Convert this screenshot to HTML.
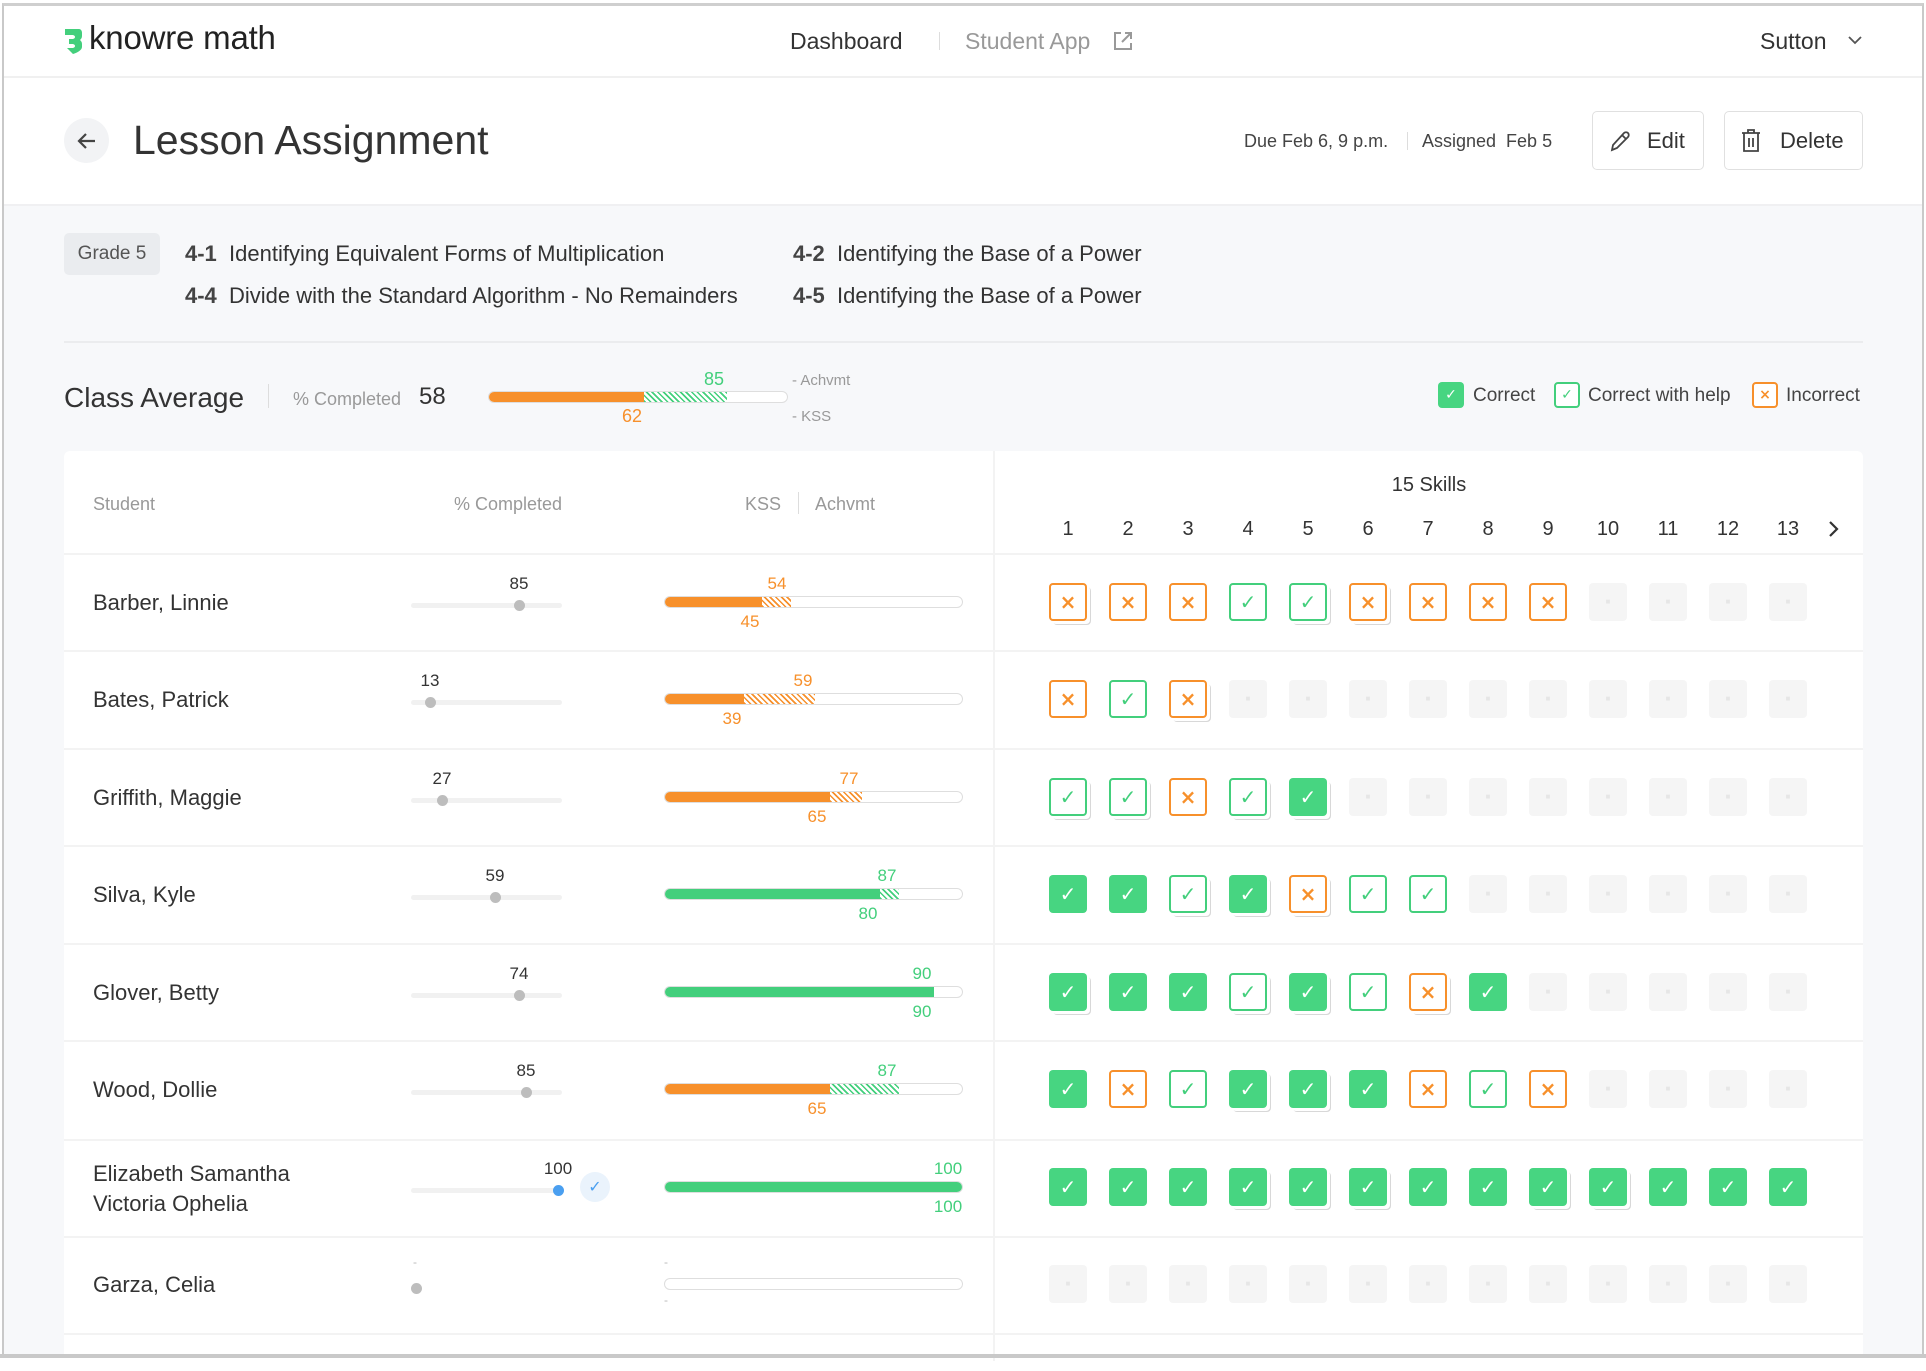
<!DOCTYPE html>
<html><head><meta charset="utf-8"><style>
*{box-sizing:border-box;margin:0;padding:0}
body{width:1926px;height:1358px;position:relative;overflow:hidden;background:#fff;font-family:"Liberation Sans",sans-serif;color:#333}
.a{position:absolute;white-space:nowrap}
.c{transform:translateX(-50%)}
.frame{position:absolute;left:2px;top:3px;width:1922px;height:1353px;border:2px solid #c9c9c9;border-top:3px solid #cfcfcf}
.or{color:#f7902b}.gr{color:#43cf7c}
.track{position:absolute;height:5px;background:#f1f1f1;border-radius:3px}
.dot{position:absolute;width:11px;height:11px;border-radius:50%;background:#bdbdbd}
.bar{position:absolute;height:12px;border:1px solid #dedede;border-radius:6px;background:#fff;overflow:hidden}
.sol{position:absolute;left:0;top:0;bottom:0}
.hat{position:absolute;top:0;bottom:0}
.hatO{background:repeating-linear-gradient(45deg,#f7902b 0 1.6px,#fff 1.6px 4px)}
.hatG{background:repeating-linear-gradient(45deg,#43cf7c 0 1.6px,#fff 1.6px 4px)}
.boxes{position:absolute;left:1049px;display:flex;gap:22px}
.b{width:38px;height:38px;border-radius:4px;display:flex;align-items:center;justify-content:center;font-size:20px;font-family:"DejaVu Sans",sans-serif;font-weight:bold}
.X{border:2px solid #f7902b;color:#f7902b;background:#fff}
.H{border:2px solid #43cf7c;color:#43cf7c;background:#fff}
.C{background:#47d581;color:#fff}
.E{background:#f5f5f5;color:#e6e6e6;font-size:5px}
.s{box-shadow:3px 3px 0 #fff,4px 4px 0 #d8d8d8}
.nm{position:absolute;left:93px;font-size:22px;color:#333}
.lbl{position:absolute;font-size:17px}
.hl{position:absolute;left:64px;width:1799px;height:2px;background:#f3f3f3}
</style></head><body>
<div class="frame"></div>
<!-- header -->
<svg class="a" style="left:63px;top:27px" width="20" height="27" viewBox="0 0 20 27"><path d="M2 2h14c2 0 3 2 3 4v3c0 2-1 3-2 4 1 1 2 2 2 4v3c0 3-5 6-9 7L4 21H9c2 0 3-1 3-2s-1-2-3-2H6v-5h3c2 0 3-1 3-2S11 8 9 8H2z" fill="#43cf7c"/></svg>
<div class="a" style="left:89px;top:19px;font-size:33px;font-weight:500;color:#222;letter-spacing:-0.2px">knowre math</div>
<div class="a" style="left:790px;top:28px;font-size:23px;color:#333">Dashboard</div>
<div class="a" style="left:939px;top:32px;width:1px;height:18px;background:#ddd"></div>
<div class="a" style="left:965px;top:28px;font-size:23px;color:#999">Student App</div>
<svg class="a" style="left:1112px;top:30px" width="22" height="22" viewBox="0 0 22 22" fill="none" stroke="#999" stroke-width="2"><path d="M9 3H3v16h16v-6M13 3h6v6M19 3l-9 9"/></svg>
<div class="a" style="left:1760px;top:28px;font-size:23px;color:#333">Sutton</div>
<svg class="a" style="left:1848px;top:35px" width="14" height="10" viewBox="0 0 14 10" fill="none" stroke="#555" stroke-width="1.8"><path d="M1 2l6 6 6-6"/></svg>
<div class="a" style="left:4px;top:76px;width:1918px;height:2px;background:#f0f0f0"></div>
<!-- title -->
<div class="a" style="left:64px;top:118px;width:45px;height:45px;border-radius:50%;background:#f2f3f5"></div>
<svg class="a" style="left:75px;top:129px" width="24" height="24" viewBox="0 0 24 24" fill="none" stroke="#444" stroke-width="2.2"><path d="M20 12H4M11 5l-7 7 7 7"/></svg>
<div class="a" style="left:133px;top:117px;font-size:41px;color:#333">Lesson Assignment</div>
<div class="a" style="left:1244px;top:131px;font-size:18px;color:#444">Due Feb 6, 9 p.m.</div>
<div class="a" style="left:1407px;top:132px;width:1px;height:18px;background:#ddd"></div>
<div class="a" style="left:1422px;top:131px;font-size:18px;color:#444">Assigned&nbsp; Feb 5</div>
<div class="a" style="left:1592px;top:111px;width:112px;height:59px;border:1px solid #e0e0e0;border-radius:5px;background:#fff"></div>
<svg class="a" style="left:1608px;top:129px" width="24" height="24" viewBox="0 0 24 24" fill="none" stroke="#444" stroke-width="1.8"><path d="M4 21l1-5L16 4c1-1 3-1 4 0s1 3 0 4L9 19z M14 6l4 4"/></svg>
<div class="a" style="left:1647px;top:128px;font-size:22px;color:#333">Edit</div>
<div class="a" style="left:1724px;top:111px;width:139px;height:59px;border:1px solid #e0e0e0;border-radius:5px;background:#fff"></div>
<svg class="a" style="left:1740px;top:128px" width="22" height="26" viewBox="0 0 22 26" fill="none" stroke="#444" stroke-width="1.8"><path d="M2 5h18M8 5V2h6v3M4 5v18h14V5M9 10v9M13 10v9"/></svg>
<div class="a" style="left:1780px;top:128px;font-size:22px;color:#333">Delete</div>
<!-- gray area -->
<div class="a" style="left:4px;top:204px;width:1918px;height:1150px;background:#f7f8fa;border-top:2px solid #f0f0f2"></div>
<div class="a" style="left:64px;top:233px;width:96px;height:42px;border-radius:5px;background:#eaecef;font-size:19px;color:#555;text-align:center;line-height:42px">Grade 5</div>
<div class="a" style="left:185px;top:241px;font-size:22px;color:#333"><b style="font-weight:600;color:#444">4-1</b>&nbsp; Identifying Equivalent Forms of Multiplication</div>
<div class="a" style="left:185px;top:283px;font-size:22px;color:#333"><b style="font-weight:600;color:#444">4-4</b>&nbsp; Divide with the Standard Algorithm - No Remainders</div>
<div class="a" style="left:793px;top:241px;font-size:22px;color:#333"><b style="font-weight:600;color:#444">4-2</b>&nbsp; Identifying the Base of a Power</div>
<div class="a" style="left:793px;top:283px;font-size:22px;color:#333"><b style="font-weight:600;color:#444">4-5</b>&nbsp; Identifying the Base of a Power</div>
<div class="a" style="left:64px;top:341px;width:1799px;height:2px;background:#ebecee"></div>
<!-- class average -->
<div class="a" style="left:64px;top:382px;font-size:28px;color:#333">Class Average</div>
<div class="a" style="left:268px;top:384px;width:1px;height:24px;background:#ddd"></div>
<div class="a" style="left:293px;top:389px;font-size:18px;color:#999">% Completed</div>
<div class="a" style="left:419px;top:383px;font-size:24px;color:#333">58</div>
<div class="bar" style="left:488px;top:391px;width:300px;background:#fff">
 <div class="sol" style="width:155px;background:#f7902b"></div>
 <div class="hat hatG" style="left:155px;width:83px"></div>
</div>
<div class="lbl gr c" style="left:714px;top:369px;font-size:18px">85</div>
<div class="lbl or c" style="left:632px;top:406px;font-size:18px">62</div>
<div class="a" style="left:792px;top:372px;font-size:15px;color:#999">- Achvmt</div>
<div class="a" style="left:792px;top:408px;font-size:15px;color:#999">- KSS</div>
<!-- legend -->
<div class="a b C" style="left:1438px;top:382px;width:26px;height:26px;font-size:14px">✓</div>
<div class="a" style="left:1473px;top:385px;font-size:19px;color:#444">Correct</div>
<div class="a b H" style="left:1554px;top:382px;width:26px;height:26px;font-size:14px">✓</div>
<div class="a" style="left:1588px;top:385px;font-size:19px;color:#444">Correct with help</div>
<div class="a b X" style="left:1752px;top:382px;width:26px;height:26px;font-size:14px">×</div>
<div class="a" style="left:1786px;top:385px;font-size:19px;color:#444">Incorrect</div>
<!-- table card -->
<div class="a" style="left:64px;top:451px;width:1799px;height:920px;background:#fff;border-radius:6px"></div>
<div class="a" style="left:993px;top:451px;width:2px;height:910px;background:#f3f3f3"></div>
<div class="a" style="left:93px;top:494px;font-size:18px;color:#999">Student</div>
<div class="a" style="left:454px;top:494px;font-size:18px;color:#999">% Completed</div>
<div class="a" style="left:745px;top:494px;font-size:18px;color:#999">KSS</div>
<div class="a" style="left:798px;top:492px;width:1px;height:22px;background:#ddd"></div>
<div class="a" style="left:815px;top:494px;font-size:18px;color:#999">Achvmt</div>
<div class="a c" style="left:1429px;top:474px;font-size:20px;color:#333">15 Skills</div>
<div class="a" style="left:1049px;top:518px;display:flex;gap:0;font-size:20px;color:#333">
<span style="width:60px;text-align:center;margin-left:-11px">1</span><span style="width:60px;text-align:center">2</span><span style="width:60px;text-align:center">3</span><span style="width:60px;text-align:center">4</span><span style="width:60px;text-align:center">5</span><span style="width:60px;text-align:center">6</span><span style="width:60px;text-align:center">7</span><span style="width:60px;text-align:center">8</span><span style="width:60px;text-align:center">9</span><span style="width:60px;text-align:center">10</span><span style="width:60px;text-align:center">11</span><span style="width:60px;text-align:center">12</span><span style="width:60px;text-align:center">13</span></div>
<svg class="a" style="left:1828px;top:520px" width="12" height="18" viewBox="0 0 12 18" fill="none" stroke="#333" stroke-width="2.2"><path d="M2 2l7 7-7 7"/></svg>
<div class="hl" style="top:553px"></div>
<div class="hl" style="top:650px"></div>
<div class="hl" style="top:748px"></div>
<div class="hl" style="top:845px"></div>
<div class="hl" style="top:943px"></div>
<div class="hl" style="top:1040px"></div>
<div class="hl" style="top:1139px"></div>
<div class="hl" style="top:1236px"></div>
<div class="hl" style="top:1333px"></div>

<!-- Row 1 y=602 -->
<div class="nm" style="top:590px">Barber, Linnie</div>
<div class="lbl c" style="left:519px;top:574px">85</div>
<div class="track" style="left:411px;top:603px;width:151px"></div><div class="dot" style="left:514px;top:600px"></div>
<div class="bar" style="left:664px;top:596px;width:299px"><div class="sol" style="width:97px;background:#f7902b"></div><div class="hat hatO" style="left:97px;width:29px"></div></div>
<div class="lbl or c" style="left:777px;top:574px">54</div><div class="lbl or c" style="left:750px;top:612px">45</div>
<div class="boxes" style="top:583px"><div class="b X s">×</div><div class="b X">×</div><div class="b X">×</div><div class="b H">✓</div><div class="b H s">✓</div><div class="b X s">×</div><div class="b X">×</div><div class="b X">×</div><div class="b X">×</div><div class="b E">■</div><div class="b E">■</div><div class="b E">■</div><div class="b E">■</div></div>

<!-- Row 2 y=699 -->
<div class="nm" style="top:687px">Bates, Patrick</div>
<div class="lbl c" style="left:430px;top:671px">13</div>
<div class="track" style="left:411px;top:700px;width:151px"></div><div class="dot" style="left:425px;top:697px"></div>
<div class="bar" style="left:664px;top:693px;width:299px"><div class="sol" style="width:79px;background:#f7902b"></div><div class="hat hatO" style="left:79px;width:71px"></div></div>
<div class="lbl or c" style="left:803px;top:671px">59</div><div class="lbl or c" style="left:732px;top:709px">39</div>
<div class="boxes" style="top:680px"><div class="b X">×</div><div class="b H">✓</div><div class="b X s">×</div><div class="b E">■</div><div class="b E">■</div><div class="b E">■</div><div class="b E">■</div><div class="b E">■</div><div class="b E">■</div><div class="b E">■</div><div class="b E">■</div><div class="b E">■</div><div class="b E">■</div></div>

<!-- Row 3 y=797 -->
<div class="nm" style="top:785px">Griffith, Maggie</div>
<div class="lbl c" style="left:442px;top:769px">27</div>
<div class="track" style="left:411px;top:798px;width:151px"></div><div class="dot" style="left:437px;top:795px"></div>
<div class="bar" style="left:664px;top:791px;width:299px"><div class="sol" style="width:165px;background:#f7902b"></div><div class="hat hatO" style="left:165px;width:32px"></div></div>
<div class="lbl or c" style="left:849px;top:769px">77</div><div class="lbl or c" style="left:817px;top:807px">65</div>
<div class="boxes" style="top:778px"><div class="b H s">✓</div><div class="b H s">✓</div><div class="b X">×</div><div class="b H s">✓</div><div class="b C s">✓</div><div class="b E">■</div><div class="b E">■</div><div class="b E">■</div><div class="b E">■</div><div class="b E">■</div><div class="b E">■</div><div class="b E">■</div><div class="b E">■</div></div>

<!-- Row 4 y=894 -->
<div class="nm" style="top:882px">Silva, Kyle</div>
<div class="lbl c" style="left:495px;top:866px">59</div>
<div class="track" style="left:411px;top:895px;width:151px"></div><div class="dot" style="left:490px;top:892px"></div>
<div class="bar" style="left:664px;top:888px;width:299px"><div class="sol" style="width:215px;background:#43cf7c"></div><div class="hat hatG" style="left:215px;width:19px"></div></div>
<div class="lbl gr c" style="left:887px;top:866px">87</div><div class="lbl gr c" style="left:868px;top:904px">80</div>
<div class="boxes" style="top:875px"><div class="b C">✓</div><div class="b C">✓</div><div class="b H s">✓</div><div class="b C s">✓</div><div class="b X s">×</div><div class="b H">✓</div><div class="b H">✓</div><div class="b E">■</div><div class="b E">■</div><div class="b E">■</div><div class="b E">■</div><div class="b E">■</div><div class="b E">■</div></div>

<!-- Row 5 y=992 -->
<div class="nm" style="top:980px">Glover, Betty</div>
<div class="lbl c" style="left:519px;top:964px">74</div>
<div class="track" style="left:411px;top:993px;width:151px"></div><div class="dot" style="left:514px;top:990px"></div>
<div class="bar" style="left:664px;top:986px;width:299px"><div class="sol" style="width:269px;background:#43cf7c"></div></div>
<div class="lbl gr c" style="left:922px;top:964px">90</div><div class="lbl gr c" style="left:922px;top:1002px">90</div>
<div class="boxes" style="top:973px"><div class="b C s">✓</div><div class="b C">✓</div><div class="b C">✓</div><div class="b H s">✓</div><div class="b C s">✓</div><div class="b H">✓</div><div class="b X s">×</div><div class="b C">✓</div><div class="b E">■</div><div class="b E">■</div><div class="b E">■</div><div class="b E">■</div><div class="b E">■</div></div>

<!-- Row 6 y=1089 -->
<div class="nm" style="top:1077px">Wood, Dollie</div>
<div class="lbl c" style="left:526px;top:1061px">85</div>
<div class="track" style="left:411px;top:1090px;width:151px"></div><div class="dot" style="left:521px;top:1087px"></div>
<div class="bar" style="left:664px;top:1083px;width:299px"><div class="sol" style="width:165px;background:#f7902b"></div><div class="hat hatG" style="left:165px;width:69px"></div></div>
<div class="lbl gr c" style="left:887px;top:1061px">87</div><div class="lbl or c" style="left:817px;top:1099px">65</div>
<div class="boxes" style="top:1070px"><div class="b C">✓</div><div class="b X">×</div><div class="b H">✓</div><div class="b C s">✓</div><div class="b C s">✓</div><div class="b C">✓</div><div class="b X">×</div><div class="b H">✓</div><div class="b X">×</div><div class="b E">■</div><div class="b E">■</div><div class="b E">■</div><div class="b E">■</div></div>

<!-- Row 7 y=1187 -->
<div class="nm" style="top:1159px;line-height:30px">Elizabeth Samantha<br>Victoria Ophelia</div>
<div class="lbl c" style="left:558px;top:1159px">100</div>
<div class="track" style="left:411px;top:1188px;width:151px"></div><div class="dot" style="left:553px;top:1185px;background:#4a9ff0"></div>
<div class="a" style="left:580px;top:1172px;width:30px;height:30px;border-radius:50%;background:#eaf3fc;color:#4a9ff0;font-family:'DejaVu Sans',sans-serif;font-size:16px;text-align:center;line-height:30px">✓</div>
<div class="bar" style="left:664px;top:1181px;width:299px"><div class="sol" style="width:299px;background:#43cf7c"></div></div>
<div class="lbl gr c" style="left:948px;top:1159px">100</div><div class="lbl gr c" style="left:948px;top:1197px">100</div>
<div class="boxes" style="top:1168px"><div class="b C">✓</div><div class="b C">✓</div><div class="b C">✓</div><div class="b C s">✓</div><div class="b C s">✓</div><div class="b C s">✓</div><div class="b C">✓</div><div class="b C">✓</div><div class="b C s">✓</div><div class="b C s">✓</div><div class="b C">✓</div><div class="b C">✓</div><div class="b C">✓</div></div>

<!-- Row 8 y=1284 -->
<div class="nm" style="top:1272px">Garza, Celia</div>
<div class="lbl" style="left:413px;top:1255px;color:#bbb;font-size:12px">-</div>
<div class="dot" style="left:411px;top:1283px"></div>
<div class="bar" style="left:664px;top:1278px;width:299px"></div>
<div class="lbl" style="left:664px;top:1255px;color:#bbb;font-size:12px">-</div><div class="lbl" style="left:664px;top:1293px;color:#bbb;font-size:12px">-</div>
<div class="boxes" style="top:1265px"><div class="b E">■</div><div class="b E">■</div><div class="b E">■</div><div class="b E">■</div><div class="b E">■</div><div class="b E">■</div><div class="b E">■</div><div class="b E">■</div><div class="b E">■</div><div class="b E">■</div><div class="b E">■</div><div class="b E">■</div><div class="b E">■</div></div>

<div class="a" style="left:0;top:1354px;width:1926px;height:4px;background:#c9c9c9"></div>
</body></html>
